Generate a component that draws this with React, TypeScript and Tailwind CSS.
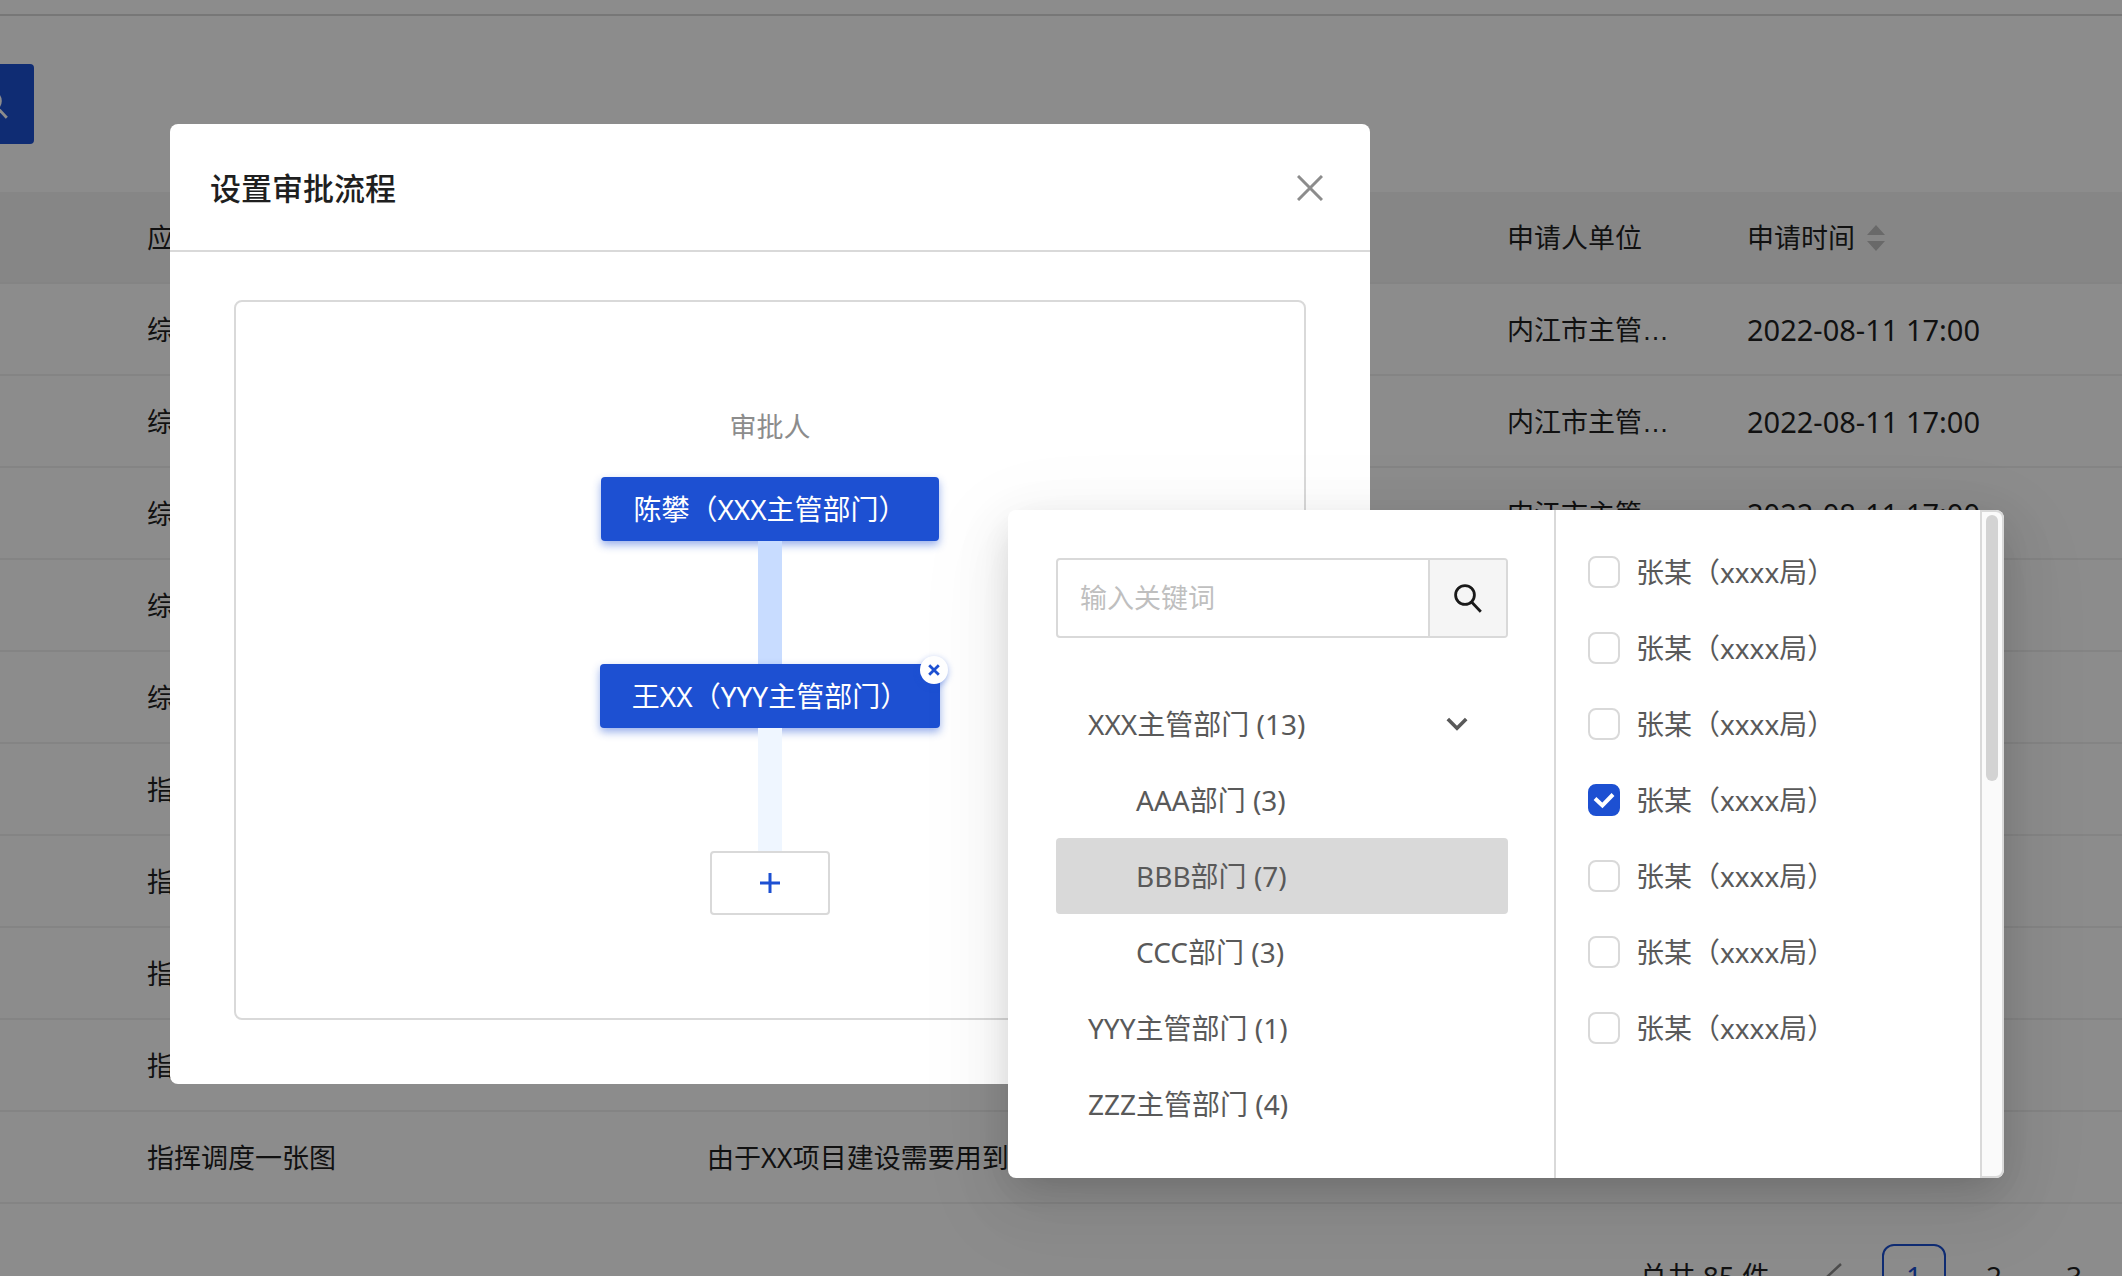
import { useState } from "react";

type Row = {
  name: string;
  reason: string;
  org: string;
  time: string;
};

type Department = {
  id: string;
  label: string;
  child?: boolean;
  expandable?: boolean;
};

const ORG = "内江市主管";
const TIME = "2022-08-11 17:00";

const rows: Row[] = [
  ...Array.from({ length: 3 }, () => ({ name: "综合应用", reason: "", org: ORG, time: TIME })),
  ...Array.from({ length: 2 }, () => ({ name: "综合应用", reason: "", org: "", time: "" })),
  ...Array.from({ length: 4 }, () => ({ name: "指挥调度", reason: "", org: "", time: "" })),
  { name: "指挥调度一张图", reason: "由于XX项目建设需要用到", org: "", time: "" },
];

const departments: Department[] = [
  { id: "xxx", label: "XXX主管部门 (13)", expandable: true },
  { id: "aaa", label: "AAA部门 (3)", child: true },
  { id: "bbb", label: "BBB部门 (7)", child: true },
  { id: "ccc", label: "CCC部门 (3)", child: true },
  { id: "yyy", label: "YYY主管部门 (1)" },
  { id: "zzz", label: "ZZZ主管部门 (4)" },
];

const people = Array.from({ length: 7 }, (_, i) => ({ id: `person-${i}`, name: "张某（xxxx局）" }));

function SearchIcon() {
  return (
    <svg width="28" height="29" viewBox="0 0 28 29" fill="none" stroke="currentColor" strokeWidth="2.8">
      <circle cx="11" cy="11" r="9.4" />
      <path d="M17.6 18l9.2 9.8" />
    </svg>
  );
}

function ApplicationTable() {
  return (
    <table className="w-full table-fixed border-separate border-spacing-0 text-left text-[27px] leading-10 text-[#1f1f1f] [&_td]:border-b-2 [&_td]:border-[#f0f0f0] [&_td]:pt-0.5 [&_th]:border-b-2 [&_th]:border-[#f0f0f0] [&_th]:pt-0.5">
      <colgroup>
        <col className="w-[131px]" />
        <col className="w-[560px]" />
        <col className="w-[800px]" />
        <col className="w-[240px]" />
        <col />
      </colgroup>
      <thead>
        <tr className="h-[92px] bg-[#f5f5f5]">
          <th />
          <th className="px-4 font-normal">应用名称</th>
          <th className="px-4 font-normal">申请理由</th>
          <th className="px-4 font-normal">申请人单位</th>
          <th className="px-4 font-normal">
            <button className="flex items-center gap-3">
              申请时间
              <svg width="18" height="26" viewBox="0 0 18 26" fill="#bfbfbf">
                <path d="M9 0l9 10H0zM9 26l9-10H0z" />
              </svg>
            </button>
          </th>
        </tr>
      </thead>
      <tbody>
        {rows.map((row, i) => (
          <tr key={i} className="h-[92px]">
            <td />
            <td className="px-4">{row.name}</td>
            <td className="px-4">{row.reason}</td>
            <td className="px-4">
              {row.org}
              {row.org && <span className="font-['Liberation_Sans',sans-serif]">…</span>}
            </td>
            <td className="px-4 text-[29px]">{row.time}</td>
          </tr>
        ))}
      </tbody>
    </table>
  );
}

function Pagination() {
  return (
    <nav className="mt-10 flex items-center justify-end gap-4 pr-4 text-[28px] leading-10 text-[#1f1f1f]">
      <span className="mr-4">总共 85 件</span>
      <button aria-label="上一页" className="flex size-16 items-center justify-center text-[#8c8c8c]">
        <svg width="16" height="26" viewBox="0 0 16 26" fill="none" stroke="currentColor" strokeWidth="2.5">
          <path d="M15 1L2 13l13 12" />
        </svg>
      </button>
      <button className="size-16 rounded-xl border-2 border-[#1d50d2] text-[#1d50d2]">1</button>
      <button className="size-16">2</button>
      <button className="size-16">3</button>
    </nav>
  );
}

function ApprovalFlow() {
  return (
    <div className="flex h-[720px] flex-col items-center justify-center rounded-lg border-2 border-[#d9d9d9]">
      <p className="mb-7 text-[27px] leading-[44px] text-[#8c8c8c]">审批人</p>
      <div className="flex h-16 items-center rounded bg-[#1d50d2] px-8 text-[28px] text-white shadow-[0_4px_8px_rgba(29,80,210,0.45)]">
        陈攀（XXX主管部门）
      </div>
      <div className="relative h-[123px] w-6 bg-[#c8dcff]" />
      <div className="relative flex h-16 items-center rounded bg-[#1d50d2] px-8 text-[28px] text-white shadow-[0_4px_8px_rgba(29,80,210,0.45)]">
        王XX（YYY主管部门）
        <button
          aria-label="移除"
          className="absolute -top-2 -right-2 flex size-7 items-center justify-center rounded-full bg-white text-[#1d50d2] shadow-[0_2px_6px_rgba(29,80,210,0.4)]"
        >
          <svg width="12" height="12" viewBox="0 0 12 12" stroke="currentColor" strokeWidth="2.8">
            <path d="M1.2 1.2l9.6 9.6M10.8 1.2l-9.6 9.6" />
          </svg>
        </button>
      </div>
      <div className="relative h-[123px] w-6 bg-[#eff6ff]" />
      <button
        aria-label="添加审批人"
        className="flex h-16 w-[120px] items-center justify-center rounded border-2 border-[#d9d9d9] bg-white text-[#1d50d2]"
      >
        <svg width="20" height="20" viewBox="0 0 20 20" stroke="currentColor" strokeWidth="3">
          <path d="M10 0v20M0 10h20" />
        </svg>
      </button>
    </div>
  );
}

function PeoplePicker() {
  const [selected, setSelected] = useState("bbb");
  const [checked, setChecked] = useState<string[]>(["person-3"]);

  const toggle = (id: string) =>
    setChecked((prev) => (prev.includes(id) ? prev.filter((p) => p !== id) : [...prev, id]));

  return (
    <div className="absolute top-[386px] left-[838px] flex w-[996px] overflow-hidden rounded-lg bg-white text-[28px] leading-10 text-[#595959] shadow-[0_12px_32px_-8px_rgba(0,0,0,0.12),0_18px_56px_rgba(0,0,0,0.1),0_24px_96px_24px_rgba(0,0,0,0.03)]">
      <div className="min-w-0 flex-1 border-r-2 border-[#d9d9d9] pt-12 pr-[46px] pb-9 pl-12">
        <div className="flex h-20 overflow-hidden rounded border-2 border-[#d9d9d9]">
          <input
            type="text"
            aria-label="关键词"
            placeholder="输入关键词"
            className="min-w-0 flex-1 px-[22px] text-[27px] outline-none placeholder:text-[#bfbfbf]"
          />
          <button
            aria-label="搜索"
            className="flex w-[78px] items-center justify-center border-l-2 border-[#d9d9d9] bg-[#f5f5f5] text-[#1a1a1a]"
          >
            <SearchIcon />
          </button>
        </div>
        <ul className="mt-12">
          {departments.map((dept) => (
            <li key={dept.id}>
              <button
                onClick={() => setSelected(dept.id)}
                className={`flex h-[76px] w-full items-center justify-between rounded pr-10 ${
                  dept.child ? "pl-20" : "pl-8"
                } ${selected === dept.id ? "bg-[#d9d9d9]" : ""}`}
              >
                {dept.label}
                {dept.expandable && (
                  <svg width="22" height="14" viewBox="0 0 22 14" fill="none" stroke="currentColor" strokeWidth="3.6">
                    <path d="M1.8 2l9.2 9.2L20.2 2" />
                  </svg>
                )}
              </button>
            </li>
          ))}
        </ul>
      </div>

      <ul className="w-[424px] shrink-0 pt-6 pl-8">
        {people.map((person) => (
          <li key={person.id} className="flex h-[76px] items-center gap-4">
            <span className="relative size-8">
              <input
                id={person.id}
                type="checkbox"
                checked={checked.includes(person.id)}
                onChange={() => toggle(person.id)}
                className="block size-8 appearance-none rounded-lg border-2 border-[#d9d9d9] bg-white checked:border-[#1d50d2] checked:bg-[#1d50d2]"
              />
              {checked.includes(person.id) && (
                <svg
                  className="pointer-events-none absolute inset-0"
                  width="32"
                  height="32"
                  viewBox="0 0 32 32"
                  fill="none"
                  stroke="#fff"
                  strokeWidth="4"
                >
                  <path d="M7 14.5l7.4 7L25 10.5" />
                </svg>
              )}
            </span>
            <label htmlFor={person.id}>{person.name}</label>
          </li>
        ))}
      </ul>

      <div className="w-6 shrink-0 rounded-r-lg border-2 border-[#d9d9d9] bg-[#fafafa] px-1 pt-[3px]">
        <div className="h-[266px] w-3 rounded-full bg-[#d3d3d3]" />
      </div>
    </div>
  );
}

export default function App() {
  return (
    <div className="relative h-screen overflow-hidden bg-white font-['Noto_Sans','Noto_Sans_CJK_SC',sans-serif]">
      <header className="h-4 border-b-2 border-[#d9d9d9]" />
      <div className="my-12 -ml-[46px]">
        <button aria-label="查询" className="flex size-20 items-center justify-center rounded bg-[#1d50d2] text-white">
          <SearchIcon />
        </button>
      </div>
      <ApplicationTable />
      <Pagination />

      <div className="absolute inset-0 bg-black/45">
        <section
          role="dialog"
          aria-labelledby="dialog-title"
          className="relative mt-[124px] ml-[170px] w-[1200px] rounded-lg bg-white"
        >
          <div className="flex h-32 items-center justify-between border-b-2 border-[#d9d9d9] px-10 pt-0.5">
            <h2 id="dialog-title" className="text-[31px] leading-10 font-medium text-[#1f1f1f]">
              设置审批流程
            </h2>
            <button aria-label="关闭" className="flex size-10 items-center justify-center text-[#8c8c8c]">
              <svg width="26" height="26" viewBox="0 0 26 26" stroke="currentColor" strokeWidth="3">
                <path d="M1 1l24 24M25 1L1 25" />
              </svg>
            </button>
          </div>
          <div className="px-16 pt-12 pb-16">
            <ApprovalFlow />
          </div>
          <PeoplePicker />
        </section>
      </div>
    </div>
  );
}
